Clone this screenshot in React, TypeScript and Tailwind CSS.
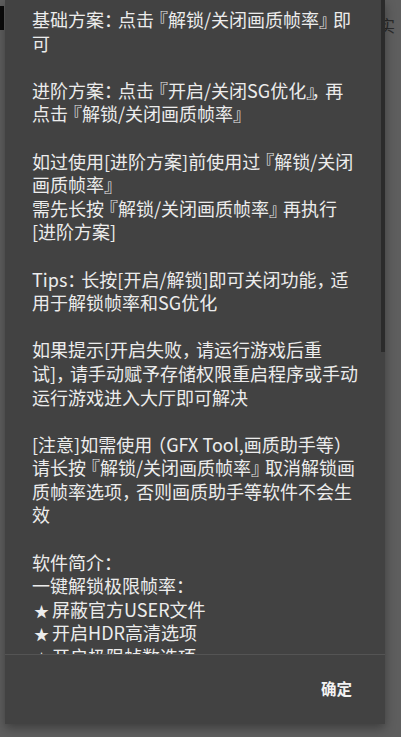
import React from 'react';

const lines: string[] = [
  '基础方案：点击『解锁/关闭画质帧率』即',
  '可',
  '',
  '进阶方案：点击『开启/关闭SG优化』，再',
  '点击『解锁/关闭画质帧率』',
  '',
  '如过使用[进阶方案]前使用过『解锁/关闭',
  '画质帧率』',
  '需先长按『解锁/关闭画质帧率』再执行',
  '[进阶方案]',
  '',
  'Tips：长按[开启/解锁]即可关闭功能，适',
  '用于解锁帧率和SG优化',
  '',
  '如果提示[开启失败，请运行游戏后重',
  '试]，请手动赋予存储权限重启程序或手动',
  '运行游戏进入大厅即可解决',
  '',
  '[注意]如需使用（GFX Tool,画质助手等）',
  '请长按『解锁/关闭画质帧率』取消解锁画',
  '质帧率选项，否则画质助手等软件不会生',
  '效',
  '',
  '软件简介：',
  '一键解锁极限帧率：',
  '★屏蔽官方USER文件',
  '★开启HDR高清选项',
  '★开启极限帧数选项',
];

const opening = '『（';
const closing = '』：，）';

// the reference font sets CJK punctuation a bit tighter than a full em
function renderLine(text: string) {
  return Array.from(text).map((ch, i) => {
    if (opening.includes(ch)) {
      return (
        <span key={i} className="ml-[-4px]">
          {ch}
        </span>
      );
    }
    if (closing.includes(ch)) {
      return (
        <span key={i} className="mr-[-4px]">
          {ch}
        </span>
      );
    }
    if (ch === '★') {
      return (
        <span key={i} className="text-[15px] pl-[2px] pr-[3px]">
          {ch}
        </span>
      );
    }
    return ch;
  });
}

export default function App() {
  return (
    <div
      className="relative w-[401px] h-[737px] overflow-hidden bg-[#5e5e5e]"
      style={{ fontFamily: '"Noto Sans CJK SC", "Noto Sans", sans-serif' }}
    >
      {/* dimmed page behind the dialog */}
      <div className="absolute left-0 top-[6px] w-[4px] h-[24px] bg-[#0a0a0a]" />
      <div className="absolute left-[379px] top-[17px] text-[16px] leading-none text-[#2a2a2a]">实</div>

      {/* dialog */}
      <div className="absolute left-[5px] top-0 w-[380px] h-[724px] bg-[#424242] flex flex-col shadow-[0_4px_10px_rgba(0,0,0,0.35)]">
        <div className="relative flex-1 overflow-hidden">
          <div className="pl-[27px] pt-[8px] text-[18px] leading-[23.6px] text-[#ececec]">
            {lines.map((l, i) => (
              <div key={i} className="whitespace-pre h-[23.6px]">
                {renderLine(l)}
              </div>
            ))}
          </div>
          {/* scrollbar */}
          <div className="absolute right-0 top-0 w-[4px] h-[352px] bg-[#2b2b2b]" />
        </div>
        <div className="h-px bg-[#545454]" />
        <div className="h-[69px] flex items-center justify-end pr-[33px]">
          <button className="text-[15.5px] font-bold text-[#f2f2f2] pb-[2px]">确定</button>
        </div>
      </div>
    </div>
  );
}
